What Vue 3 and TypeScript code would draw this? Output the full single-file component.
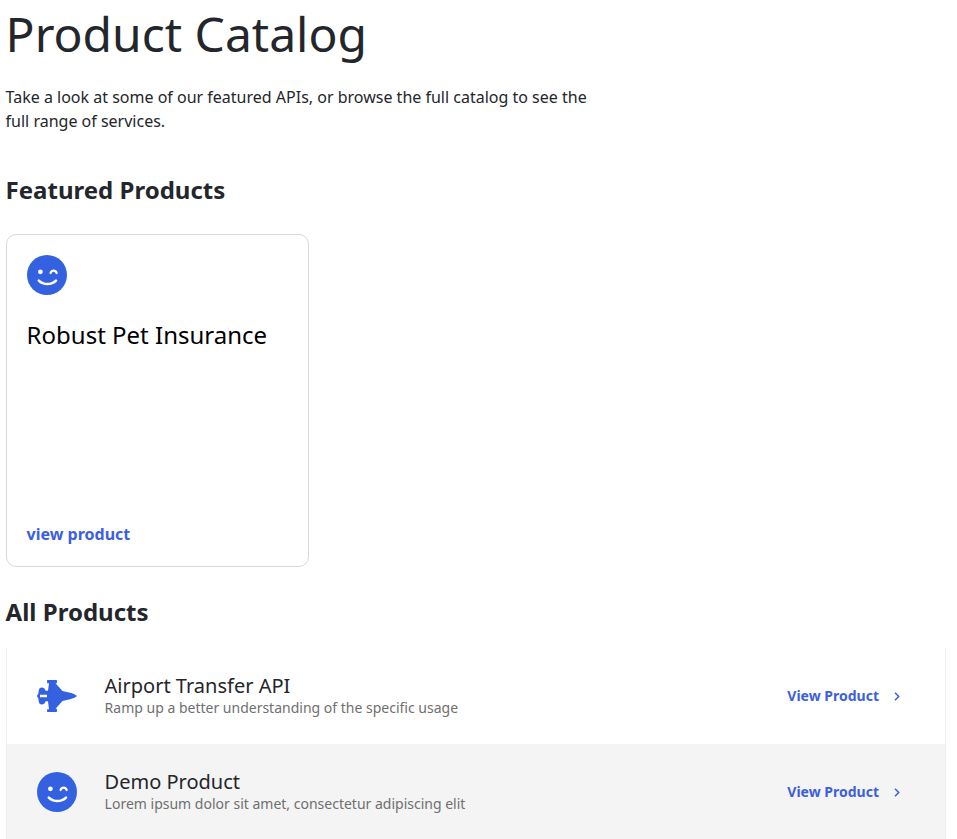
<script setup lang="ts">
const products = [
  { name: 'Airport Transfer API', desc: 'Ramp up a better understanding of the specific usage', icon: 'plane' },
  { name: 'Demo Product', desc: 'Lorem ipsum dolor sit amet, consectetur adipiscing elit', icon: 'smile' },
]
</script>

<template>
  <main class="page">
    <h1 class="title">Product Catalog</h1>
    <p class="intro">Take a look at some of our featured APIs, or browse the full catalog to see the full range of services.</p>
    <h2 class="section featured">Featured Products</h2>
    <article class="card">
      <svg class="icon" viewBox="0 0 40 40" aria-hidden="true">
        <circle cx="20" cy="20" r="20" fill="#3361e0" />
        <circle cx="13.4" cy="16.8" r="2.4" fill="#fff" />
        <path d="M23.500 18c1.200-3.200 5-3.200 6.200 0" fill="none" stroke="#fff" stroke-width="2.200" stroke-linecap="round" />
        <path d="M11.800 25.600c4.600 4.600 12.600 4.600 17.200 0" fill="none" stroke="#fff" stroke-width="2.600" stroke-linecap="round" />
      </svg>
      <h3 class="card-title">Robust Pet Insurance</h3>
      <a class="card-link">view product</a>
    </article>
    <h2 class="section all">All Products</h2>
    <ul class="list">
      <li v-for="p in products" :key="p.name" class="row">
        <svg v-if="p.icon === 'plane'" class="icon" viewBox="0 0 40 40" aria-hidden="true">
          <path fill="#3361e0" fill-rule="evenodd" d="M40 20c-1.800-1.500-4-2.500-7-3.200L25.500 15 18.500 7.200h1.400V4h-9.800v3.200h1.900L11 14.800H8.600l-1.100-2.300Q5 10.800 2.800 12l-1 2-.3 3L0 20l1.500 3 .3 3 1 2q2.200 1.200 4.700-.5l1.100-2.300H11l1 8h-1.900V36h9.800v-3.200h-1.400l7-7.800 7.500-1.800c3-.7 5.200-1.700 7-3.200zM3 18.700h7v2.600H3z" />
        </svg>
        <svg v-else class="icon" viewBox="0 0 40 40" aria-hidden="true">
          <circle cx="20" cy="20" r="20" fill="#3361e0" />
          <circle cx="13.4" cy="16.8" r="2.4" fill="#fff" />
          <path d="M23.500 18c1.200-3.200 5-3.200 6.200 0" fill="none" stroke="#fff" stroke-width="2.200" stroke-linecap="round" />
          <path d="M11.800 25.600c4.600 4.600 12.600 4.600 17.200 0" fill="none" stroke="#fff" stroke-width="2.600" stroke-linecap="round" />
        </svg>
        <div class="text">
          <div class="name">{{ p.name }}</div>
          <div class="desc">{{ p.desc }}</div>
        </div>
        <a class="row-link">
          <span>View Product</span>
          <svg class="chev" viewBox="0 0 6 9" aria-hidden="true">
            <path d="M1 .8 4.700 4.500 1 8.200" fill="none" stroke="#3b5fe0" stroke-width="1.500" />
          </svg>
        </a>
      </li>
    </ul>
  </main>
</template>

<style scoped>
.page {
  padding: 0 11px 0 5.6px;
  font-family: "Noto Sans", sans-serif;
  color: #23262b;
}
.title {
  margin: 0;
  font-size: 48px;
  line-height: 68px;
  font-weight: 400;
}
.intro {
  margin: 17px 0 0;
  width: 600px;
  font-size: 16px;
  line-height: 24px;
}
.section {
  margin: 0;
  font-size: 24px;
  line-height: 32px;
  font-weight: 700;
}
.featured {
  margin-top: 41px;
}
.all {
  margin-top: 29px;
}
.card {
  box-sizing: border-box;
  display: flex;
  flex-direction: column;
  align-items: flex-start;
  width: 303px;
  height: 333px;
  margin-top: 28px;
  padding: 20px;
  border: 1px solid #d9d9d9;
  border-radius: 10px;
}
.icon {
  flex: none;
  display: block;
  width: 40px;
  height: 40px;
}
.card-title {
  margin: 20px 0 0;
  font-size: 24px;
  line-height: 40px;
  font-weight: 400;
  color: #000;
}
.card-link {
  margin-top: auto;
  font-size: 16px;
  line-height: 24px;
  font-weight: 700;
  color: #3b5fe0;
}
.list {
  margin: 20px 0 0;
  padding: 0;
  list-style: none;
  border-left: 1px solid #eee;
  border-right: 1px solid #eee;
}
.row {
  display: flex;
  align-items: center;
  height: 96px;
  padding: 0 45px 0 30px;
}
.row:nth-child(even) {
  background: #f4f4f4;
}
.text {
  flex: 1;
  margin-left: 28px;
}
.name {
  font-size: 20px;
  line-height: 24px;
}
.desc {
  font-size: 14px;
  line-height: 20px;
  color: #6f6f6f;
}
.row-link {
  display: flex;
  align-items: center;
  gap: 15px;
  font-size: 14px;
  line-height: 20px;
  font-weight: 700;
  color: #3b5fe0;
}
.chev {
  width: 6px;
  height: 9px;
}
</style>

<style>
html,
body {
  background: #fff;
}
</style>
